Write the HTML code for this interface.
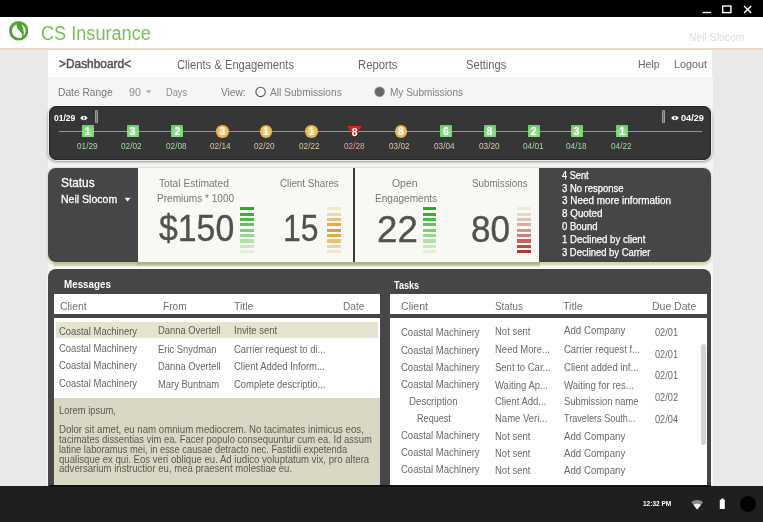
<!DOCTYPE html>
<html lang="en"><head><meta charset="utf-8"><title>CS Insurance - Dashboard</title>
<style>
html,body{margin:0;padding:0;}
body{width:763px;height:522px;overflow:hidden;background:#e9e9e9;font-family:"Liberation Sans",sans-serif;}
#app{position:relative;width:763px;height:522px;overflow:hidden;background:#e9e9e9;}
#app div,#app svg{position:absolute;}
#app span{position:absolute;white-space:pre;line-height:1;transform-origin:0 50%;font-family:"Liberation Sans",sans-serif;}
#tx{left:0;top:0;width:763px;height:522px;will-change:transform;}
</style></head><body><div id="app">
<div style="left:0px;top:0px;width:763.00px;height:17.30px;background:#000;"></div>
<div style="left:0px;top:17.3px;width:763.00px;height:30.70px;background:#fff;"></div>
<div style="left:0px;top:47.8px;width:763.00px;height:1.90px;background:#edd3c0;"></div>
<svg style="left:700px;top:3px" width="60" height="12" viewBox="0 0 60 12"><path d="M2.5 9.5h8.5" stroke="#fff" stroke-width="1.4" fill="none"/><rect x="22.7" y="3" width="8.2" height="6.6" stroke="#fff" stroke-width="1.4" fill="none"/><path d="M44 3l7.2 7M51.2 3l-7.2 7" stroke="#fff" stroke-width="1.4" fill="none"/></svg>
<svg style="left:8.5px;top:21.2px" width="19.3" height="19.6" viewBox="0 0 19.3 19.3" preserveAspectRatio="none"><circle cx="9.65" cy="9.65" r="9.65" fill="#54a233"/><path d="M7.5 3.2C7.6 7.4 9.6 8.6 11.4 10.6C13 12.4 14 14.6 12.6 16.2A6.9 6.9 0 1 1 7.5 3.2Z" fill="#fff"/><path d="M12.6 3.5A6.9 6.9 0 0 1 14.6 14.6C15.2 11 14.4 7 12.6 3.5Z" fill="#fff"/></svg>
<div style="left:48px;top:49.7px;width:664.00px;height:27.30px;background:#fff;"></div>
<div style="left:47.5px;top:77px;width:665.00px;height:410.00px;background:#f5f5f5;"></div>
<svg style="left:144.7px;top:89.3px" width="8" height="6" viewBox="0 0 8 6"><path d="M1 1.2h5.2L3.6 4.4z" fill="#aaa"/></svg>
<svg style="left:254px;top:85px" width="14" height="14" viewBox="0 0 14 14"><circle cx="6.6" cy="6.9" r="4.7" fill="#fff" stroke="#555" stroke-width="1.1"/></svg>
<svg style="left:373px;top:85px" width="14" height="14" viewBox="0 0 14 14"><circle cx="6.6" cy="6.8" r="4.9" fill="#666" stroke="#999" stroke-width="0.8"/></svg>
<div style="left:48.6px;top:106.4px;width:662.20px;height:53.80px;background:#363636;border-radius:8px;box-shadow:inset 0 0 0 1px #262626,0 0 0 1px rgba(255,255,255,.75),0 1.5px 3px 0.5px rgba(0,0,0,.4);"></div>
<div style="left:58.7px;top:131.0px;width:643.50px;height:1.25px;background:#959595;"></div>
<div style="left:95.4px;top:110.2px;width:3.10px;height:12.80px;background:#6e6e6e;border-radius:1.6px;box-shadow:inset 0 0 0 0.8px #a9a9a9;"></div>
<div style="left:661.8px;top:110.2px;width:3.10px;height:12.80px;background:#6e6e6e;border-radius:1.6px;box-shadow:inset 0 0 0 0.8px #a9a9a9;"></div>
<svg style="left:79.8px;top:114.8px" width="8" height="6" viewBox="0 0 8 6"><path d="M0.1 3Q3.9 -1.6 7.8 3Q3.9 7.6 0.1 3Z" fill="#fff"/><ellipse cx="3.9" cy="3" rx="0.75" ry="1.7" fill="#3a3a3a"/></svg>
<svg style="left:670.5px;top:114.8px" width="8" height="6" viewBox="0 0 8 6"><path d="M0.1 3Q3.9 -1.6 7.8 3Q3.9 7.6 0.1 3Z" fill="#fff"/><ellipse cx="3.9" cy="3" rx="0.75" ry="1.7" fill="#3a3a3a"/></svg>
<div style="left:81.5px;top:125.3px;width:12.00px;height:12.10px;background:radial-gradient(circle at 50% 65%,#a0e69a 0,#7fd679 55%,#5ec258 100%);"></div>
<div style="left:126.5px;top:125.3px;width:12.00px;height:12.10px;background:radial-gradient(circle at 50% 65%,#a0e69a 0,#7fd679 55%,#5ec258 100%);"></div>
<div style="left:171.4px;top:125.3px;width:12.00px;height:12.10px;background:radial-gradient(circle at 50% 65%,#a0e69a 0,#7fd679 55%,#5ec258 100%);"></div>
<div style="left:216.30px;top:125.2px;width:12.4px;height:12.4px;border-radius:6.2px;background:radial-gradient(circle at 50% 50%,#f6dfa0 0,#ecc060 45%,#d89a2c 100%);"></div>
<div style="left:259.90px;top:125.2px;width:12.4px;height:12.4px;border-radius:6.2px;background:radial-gradient(circle at 50% 50%,#f6dfa0 0,#ecc060 45%,#d89a2c 100%);"></div>
<div style="left:305.30px;top:125.2px;width:12.4px;height:12.4px;border-radius:6.2px;background:radial-gradient(circle at 50% 50%,#f6dfa0 0,#ecc060 45%,#d89a2c 100%);"></div>
<svg style="left:347.30px;top:125.3px" width="15" height="13" viewBox="0 0 15 13"><path d="M0.3 1h14.4L7.5 12.2z" fill="#e61e1e"/></svg>
<div style="left:394.90px;top:125.2px;width:12.4px;height:12.4px;border-radius:6.2px;background:radial-gradient(circle at 50% 50%,#f6dfa0 0,#ecc060 45%,#d89a2c 100%);"></div>
<div style="left:439.9px;top:125.3px;width:12.00px;height:12.10px;background:radial-gradient(circle at 50% 65%,#a0e69a 0,#7fd679 55%,#5ec258 100%);"></div>
<div style="left:483.5px;top:125.3px;width:12.00px;height:12.10px;background:radial-gradient(circle at 50% 65%,#a0e69a 0,#7fd679 55%,#5ec258 100%);"></div>
<div style="left:527.8px;top:125.3px;width:12.00px;height:12.10px;background:radial-gradient(circle at 50% 65%,#a0e69a 0,#7fd679 55%,#5ec258 100%);"></div>
<div style="left:570.6px;top:125.3px;width:12.00px;height:12.10px;background:radial-gradient(circle at 50% 65%,#a0e69a 0,#7fd679 55%,#5ec258 100%);"></div>
<div style="left:616.2px;top:125.3px;width:12.00px;height:12.10px;background:radial-gradient(circle at 50% 65%,#a0e69a 0,#7fd679 55%,#5ec258 100%);"></div>
<div style="left:48.1px;top:167.6px;width:662.90px;height:94.00px;background:#464648;border-radius:8px;box-shadow:0 2.2px 2.2px 0 #d3d6ae,0 0 2px 0.4px rgba(208,212,165,.7);"></div>
<div style="left:54px;top:261.6px;width:85.00px;height:5.60px;background:linear-gradient(to bottom,#bdbf98 0,#c3c5a0 35%,rgba(205,207,172,.7) 65%,rgba(225,227,200,0) 100%);"></div>
<div style="left:137px;top:261.6px;width:403.00px;height:5.80px;background:linear-gradient(to bottom,#b0b286 0,#b3b58a 40%,rgba(190,192,150,.75) 65%,rgba(215,217,185,0) 100%);"></div>
<div style="left:138px;top:167.6px;width:401.30px;height:94.40px;background:#f8f9f4;"></div>
<div style="left:353px;top:167.6px;width:1.60px;height:94.40px;background:#3c3c3c;"></div>
<svg style="left:124.2px;top:197.4px" width="8" height="6" viewBox="0 0 8 6"><path d="M0.6 0.8h6L3.6 4.6z" fill="#fff"/></svg>
<div style="left:240.3px;top:207.2px;width:13.80px;height:3.10px;background:#22b41f;"></div>
<div style="left:240.3px;top:212.57px;width:13.80px;height:3.10px;background:#2fb82b;"></div>
<div style="left:240.3px;top:217.94px;width:13.80px;height:3.10px;background:#44be3f;"></div>
<div style="left:240.3px;top:223.31px;width:13.80px;height:3.10px;background:#5fc659;"></div>
<div style="left:240.3px;top:228.68px;width:13.80px;height:3.10px;background:#7ccf76;"></div>
<div style="left:240.3px;top:234.05px;width:13.80px;height:3.10px;background:#98d892;"></div>
<div style="left:240.3px;top:239.42px;width:13.80px;height:3.10px;background:#b2e0ac;"></div>
<div style="left:240.3px;top:244.79px;width:13.80px;height:3.10px;background:#cbe7c3;"></div>
<div style="left:240.3px;top:250.16px;width:13.80px;height:3.10px;background:#e3eedb;"></div>
<div style="left:327.3px;top:207.2px;width:13.80px;height:3.10px;background:#ece9d0;"></div>
<div style="left:327.3px;top:212.57px;width:13.80px;height:3.10px;background:#ecd9a6;"></div>
<div style="left:327.3px;top:217.94px;width:13.80px;height:3.10px;background:#e8c47a;"></div>
<div style="left:327.3px;top:223.31px;width:13.80px;height:3.10px;background:#e3ad4e;"></div>
<div style="left:327.3px;top:228.68px;width:13.80px;height:3.10px;background:#df9f33;"></div>
<div style="left:327.3px;top:234.05px;width:13.80px;height:3.10px;background:#e2a846;"></div>
<div style="left:327.3px;top:239.42px;width:13.80px;height:3.10px;background:#e8c076;"></div>
<div style="left:327.3px;top:244.79px;width:13.80px;height:3.10px;background:#ebd6a3;"></div>
<div style="left:327.3px;top:250.16px;width:13.80px;height:3.10px;background:#ece8cf;"></div>
<div style="left:422.7px;top:207.2px;width:13.80px;height:3.10px;background:#22b41f;"></div>
<div style="left:422.7px;top:212.57px;width:13.80px;height:3.10px;background:#2fb82b;"></div>
<div style="left:422.7px;top:217.94px;width:13.80px;height:3.10px;background:#44be3f;"></div>
<div style="left:422.7px;top:223.31px;width:13.80px;height:3.10px;background:#5fc659;"></div>
<div style="left:422.7px;top:228.68px;width:13.80px;height:3.10px;background:#7ccf76;"></div>
<div style="left:422.7px;top:234.05px;width:13.80px;height:3.10px;background:#98d892;"></div>
<div style="left:422.7px;top:239.42px;width:13.80px;height:3.10px;background:#b2e0ac;"></div>
<div style="left:422.7px;top:244.79px;width:13.80px;height:3.10px;background:#cbe7c3;"></div>
<div style="left:422.7px;top:250.16px;width:13.80px;height:3.10px;background:#e3eedb;"></div>
<div style="left:517.3px;top:207.2px;width:13.80px;height:3.10px;background:#ebebde;"></div>
<div style="left:517.3px;top:212.57px;width:13.80px;height:3.10px;background:#e6d9cb;"></div>
<div style="left:517.3px;top:217.94px;width:13.80px;height:3.10px;background:#e0c4b7;"></div>
<div style="left:517.3px;top:223.31px;width:13.80px;height:3.10px;background:#d9ada2;"></div>
<div style="left:517.3px;top:228.68px;width:13.80px;height:3.10px;background:#d2958c;"></div>
<div style="left:517.3px;top:234.05px;width:13.80px;height:3.10px;background:#ca7c75;"></div>
<div style="left:517.3px;top:239.42px;width:13.80px;height:3.10px;background:#c2635e;"></div>
<div style="left:517.3px;top:244.79px;width:13.80px;height:3.10px;background:#ba4c49;"></div>
<div style="left:517.3px;top:250.16px;width:13.80px;height:3.10px;background:#b23a38;"></div>
<div style="left:48.3px;top:268.9px;width:662.50px;height:221.10px;background:#464648;border-radius:8px 8px 0 0;box-shadow:0 0 0 0.8px rgba(255,255,255,.45),0 0 3px 1px rgba(255,255,255,.4);"></div>
<div style="left:54px;top:293.6px;width:326.00px;height:20.20px;background:#fff;"></div>
<div style="left:54px;top:317.6px;width:326.00px;height:168.40px;background:#fff;"></div>
<div style="left:55.6px;top:322.3px;width:322.40px;height:15.70px;background:#e3e3cf;"></div>
<div style="left:54px;top:398.2px;width:326.00px;height:87.80px;background:#d8d8c4;"></div>
<div style="left:389.5px;top:293.6px;width:317.90px;height:20.20px;background:#fff;"></div>
<div style="left:389.5px;top:317.6px;width:317.90px;height:168.40px;background:#fff;"></div>
<div style="left:700.6px;top:343.6px;width:5.10px;height:101.90px;background:#d3d3d3;border-radius:2.5px;"></div>
<div style="left:0px;top:486px;width:763.00px;height:36.00px;background:#1f1f1f;"></div>
<div style="left:48.5px;top:485.3px;width:662.50px;height:1.30px;background:#111;"></div>
<svg style="left:690px;top:498px" width="15" height="13" viewBox="0 0 15 13"><path d="M7.2 11.6L1.3 4.2C4.6 1.2 9.8 1.2 13.1 4.2z" fill="#8a8a8a"/><path d="M7.2 11.6L3.6 7C5.6 5.2 8.8 5.2 10.8 7z" fill="#fff"/></svg>
<svg style="left:718px;top:497px" width="9" height="13" viewBox="0 0 9 13"><path d="M3.2 1.6h2.4v1.2h1.2v9.2H1.8V2.8h1.4z" fill="#fff"/></svg>
<div style="left:740px;top:496px;width:16px;height:16px;border-radius:8px;background:#000;"></div>
<div id="tx">
<span style="left:41.00px;top:23.74px;color:#72c54f;font-size:19.5px;font-weight:400;letter-spacing:0.000px;transform:scaleX(0.9293);">CS Insurance</span>
<span style="left:689.00px;top:31.77px;color:#dcdcdc;font-size:11px;font-weight:400;letter-spacing:0.000px;transform:scaleX(0.9450);">Neil Slocom</span>
<span style="left:58.80px;top:58.10px;color:#555;font-size:12px;font-weight:400;letter-spacing:0.000px;transform:scaleX(0.9902);-webkit-text-stroke:0.5px #555;">&gt;Dashboard&lt;</span>
<span style="left:177.40px;top:58.60px;color:#666;font-size:12px;font-weight:400;letter-spacing:0.000px;transform:scaleX(0.9330);">Clients &amp; Engagements</span>
<span style="left:358.00px;top:58.60px;color:#666;font-size:12px;font-weight:400;letter-spacing:0.000px;transform:scaleX(0.9401);">Reports</span>
<span style="left:465.70px;top:58.60px;color:#666;font-size:12px;font-weight:400;letter-spacing:0.000px;transform:scaleX(0.9294);">Settings</span>
<span style="left:638.30px;top:58.77px;color:#666;font-size:11px;font-weight:400;letter-spacing:0.000px;transform:scaleX(0.9553);">Help</span>
<span style="left:674.30px;top:58.77px;color:#666;font-size:11px;font-weight:400;letter-spacing:0.000px;transform:scaleX(0.9825);">Logout</span>
<span style="left:58.00px;top:86.78px;color:#777;font-size:11px;font-weight:400;letter-spacing:0.000px;transform:scaleX(0.9302);">Date Range</span>
<span style="left:128.60px;top:86.78px;color:#8c8c8c;font-size:11px;font-weight:400;letter-spacing:0.000px;transform:scaleX(0.9738);">90</span>
<span style="left:165.60px;top:86.78px;color:#8c8c8c;font-size:11px;font-weight:400;letter-spacing:0.000px;transform:scaleX(0.8372);">Days</span>
<span style="left:221.00px;top:86.78px;color:#777;font-size:11px;font-weight:400;letter-spacing:0.000px;transform:scaleX(0.9233);">View:</span>
<span style="left:269.50px;top:86.98px;color:#808080;font-size:11px;font-weight:400;letter-spacing:0.000px;transform:scaleX(0.9240);">All Submissions</span>
<span style="left:389.70px;top:86.98px;color:#808080;font-size:11px;font-weight:400;letter-spacing:0.000px;transform:scaleX(0.9122);">My Submissions</span>
<span style="left:53.70px;top:113.24px;color:#fff;font-size:9.6px;font-weight:700;letter-spacing:0.000px;transform:scaleX(0.8871);">01/29</span>
<span style="left:680.60px;top:113.24px;color:#fff;font-size:9.6px;font-weight:700;letter-spacing:0.000px;transform:scaleX(0.9505);">04/29</span>
<span style="left:60.60px;top:175.62px;color:#fff;font-size:13px;font-weight:400;letter-spacing:0.000px;transform:scaleX(0.9102);-webkit-text-stroke:0.3px #fff;">Status</span>
<span style="left:60.50px;top:193.78px;color:#fff;font-size:11px;font-weight:400;letter-spacing:0.000px;transform:scaleX(0.9569);-webkit-text-stroke:0.28px #fff;">Neil Slocom</span>
<span style="left:159.20px;top:177.97px;color:#777;font-size:11px;font-weight:400;letter-spacing:0.000px;transform:scaleX(0.9283);">Total Estimated</span>
<span style="left:157.00px;top:193.08px;color:#777;font-size:11px;font-weight:400;letter-spacing:0.000px;transform:scaleX(0.9139);">Premiums * 1000</span>
<span style="left:279.80px;top:177.97px;color:#777;font-size:11px;font-weight:400;letter-spacing:0.000px;transform:scaleX(0.8898);">Client Shares</span>
<span style="left:391.80px;top:178.47px;color:#777;font-size:11px;font-weight:400;letter-spacing:0.000px;transform:scaleX(0.9481);">Open</span>
<span style="left:375.00px;top:193.38px;color:#777;font-size:11px;font-weight:400;letter-spacing:0.000px;transform:scaleX(0.9155);">Engagements</span>
<span style="left:472.00px;top:178.28px;color:#777;font-size:11px;font-weight:400;letter-spacing:0.000px;transform:scaleX(0.8909);">Submissions</span>
<span style="left:159.30px;top:209.69px;color:#4f544b;font-size:37.5px;font-weight:400;letter-spacing:0.000px;transform:scaleX(0.9011);-webkit-text-stroke:0.4px #4f544b;text-shadow:0 0 1.5px #fff;">$150</span>
<span style="left:283.20px;top:209.69px;color:#4f544b;font-size:37.5px;font-weight:400;letter-spacing:0.000px;transform:scaleX(0.8519);-webkit-text-stroke:0.4px #4f544b;text-shadow:0 0 1.5px #fff;">15</span>
<span style="left:376.72px;top:210.69px;color:#4f544b;font-size:37.5px;font-weight:400;letter-spacing:0.000px;transform:scaleX(0.9780);-webkit-text-stroke:0.4px #4f544b;text-shadow:0 0 1.5px #fff;">22</span>
<span style="left:470.86px;top:210.69px;color:#4f544b;font-size:37.5px;font-weight:400;letter-spacing:0.000px;transform:scaleX(0.9359);-webkit-text-stroke:0.4px #4f544b;text-shadow:0 0 1.5px #fff;">80</span>
<span style="left:562.20px;top:170.85px;color:#fff;font-size:10px;font-weight:400;letter-spacing:0.000px;transform:scaleX(0.9199);-webkit-text-stroke:0.25px #fff;">4 Sent</span>
<span style="left:562.20px;top:183.65px;color:#fff;font-size:10px;font-weight:400;letter-spacing:0.000px;transform:scaleX(0.9454);-webkit-text-stroke:0.25px #fff;">3 No response</span>
<span style="left:562.20px;top:196.45px;color:#fff;font-size:10px;font-weight:400;letter-spacing:0.000px;transform:scaleX(0.9909);-webkit-text-stroke:0.25px #fff;">3 Need more information</span>
<span style="left:562.20px;top:209.25px;color:#fff;font-size:10px;font-weight:400;letter-spacing:0.000px;transform:scaleX(0.9857);-webkit-text-stroke:0.25px #fff;">8 Quoted</span>
<span style="left:562.20px;top:222.05px;color:#fff;font-size:10px;font-weight:400;letter-spacing:0.000px;transform:scaleX(0.9538);-webkit-text-stroke:0.25px #fff;">0 Bound</span>
<span style="left:562.20px;top:234.85px;color:#fff;font-size:10px;font-weight:400;letter-spacing:0.000px;transform:scaleX(0.9616);-webkit-text-stroke:0.25px #fff;">1 Declined by client</span>
<span style="left:562.20px;top:247.65px;color:#fff;font-size:10px;font-weight:400;letter-spacing:0.000px;transform:scaleX(0.9419);-webkit-text-stroke:0.25px #fff;">3 Declined by Carrier</span>
<span style="left:63.70px;top:279.27px;color:#fff;font-size:11px;font-weight:700;letter-spacing:0.000px;transform:scaleX(0.8919);">Messages</span>
<span style="left:60.00px;top:300.77px;color:#707070;font-size:11px;font-weight:400;letter-spacing:0.000px;transform:scaleX(0.9477);">Client</span>
<span style="left:162.50px;top:300.77px;color:#707070;font-size:11px;font-weight:400;letter-spacing:0.000px;transform:scaleX(0.9216);">From</span>
<span style="left:234.40px;top:300.77px;color:#707070;font-size:11px;font-weight:400;letter-spacing:0.000px;transform:scaleX(0.9479);">Title</span>
<span style="left:342.70px;top:300.77px;color:#707070;font-size:11px;font-weight:400;letter-spacing:0.000px;transform:scaleX(0.9214);">Date</span>
<span style="left:59.00px;top:326.55px;color:#5c5c55;font-size:10px;font-weight:400;letter-spacing:0.000px;transform:scaleX(0.9419);">Coastal Machinery</span>
<span style="left:157.80px;top:326.25px;color:#5c5c55;font-size:10px;font-weight:400;letter-spacing:0.000px;transform:scaleX(0.9400);">Danna Overtell</span>
<span style="left:233.50px;top:325.95px;color:#5c5c55;font-size:10px;font-weight:400;letter-spacing:0.000px;transform:scaleX(0.9450);">Invite sent</span>
<span style="left:59.00px;top:343.95px;color:#666;font-size:10px;font-weight:400;letter-spacing:0.000px;transform:scaleX(0.9419);">Coastal Machinery</span>
<span style="left:157.80px;top:344.55px;color:#666;font-size:10px;font-weight:400;letter-spacing:0.000px;transform:scaleX(0.9400);">Eric Snydman</span>
<span style="left:233.50px;top:344.95px;color:#666;font-size:10px;font-weight:400;letter-spacing:0.000px;transform:scaleX(0.9450);">Carrier request to di...</span>
<span style="left:59.00px;top:361.35px;color:#666;font-size:10px;font-weight:400;letter-spacing:0.000px;transform:scaleX(0.9419);">Coastal Machinery</span>
<span style="left:157.80px;top:362.05px;color:#666;font-size:10px;font-weight:400;letter-spacing:0.000px;transform:scaleX(0.9400);">Danna Overtell</span>
<span style="left:233.50px;top:362.45px;color:#666;font-size:10px;font-weight:400;letter-spacing:0.000px;transform:scaleX(0.9450);">Client Added Inform...</span>
<span style="left:59.00px;top:378.75px;color:#666;font-size:10px;font-weight:400;letter-spacing:0.000px;transform:scaleX(0.9419);">Coastal Machinery</span>
<span style="left:157.80px;top:379.55px;color:#666;font-size:10px;font-weight:400;letter-spacing:0.000px;transform:scaleX(0.9400);">Mary Buntnam</span>
<span style="left:233.50px;top:379.95px;color:#666;font-size:10px;font-weight:400;letter-spacing:0.000px;transform:scaleX(0.9450);">Complete descriptio...</span>
<span style="left:59.20px;top:406.15px;color:#5a5a50;font-size:10px;font-weight:400;letter-spacing:0.000px;transform:scaleX(0.9382);">Lorem ipsum,</span>
<span style="left:59.20px;top:424.95px;color:#5a5a50;font-size:10px;font-weight:400;letter-spacing:0.000px;transform:scaleX(0.9657);">Dolor sit amet, eu nam omnium mediocrem. No tacimates inimicus eos,</span>
<span style="left:59.20px;top:434.80px;color:#5a5a50;font-size:10px;font-weight:400;letter-spacing:0.000px;transform:scaleX(0.9446);">tacimates dissentias vim ea. Facer populo consequuntur cum ea. Id assum</span>
<span style="left:59.20px;top:444.65px;color:#5a5a50;font-size:10px;font-weight:400;letter-spacing:0.000px;transform:scaleX(0.9321);">latine laboramus mei, in esse causae detracto nec. Fastidii expetenda</span>
<span style="left:59.20px;top:454.50px;color:#5a5a50;font-size:10px;font-weight:400;letter-spacing:0.000px;transform:scaleX(0.9587);">qualisque ex qui. Eos veri oblique eu. Ad iudico voluptatum vix, pro altera</span>
<span style="left:59.20px;top:464.35px;color:#5a5a50;font-size:10px;font-weight:400;letter-spacing:0.000px;transform:scaleX(0.9551);">adversarium instructior eu, mea praesent molestiae eu.</span>
<span style="left:394.00px;top:279.77px;color:#fff;font-size:11px;font-weight:700;letter-spacing:0.000px;transform:scaleX(0.8263);">Tasks</span>
<span style="left:401.00px;top:300.77px;color:#707070;font-size:11px;font-weight:400;letter-spacing:0.000px;transform:scaleX(0.9620);">Client</span>
<span style="left:495.30px;top:300.77px;color:#707070;font-size:11px;font-weight:400;letter-spacing:0.000px;transform:scaleX(0.8963);">Status</span>
<span style="left:563.00px;top:300.77px;color:#707070;font-size:11px;font-weight:400;letter-spacing:0.000px;transform:scaleX(0.9677);">Title</span>
<span style="left:651.60px;top:300.77px;color:#707070;font-size:11px;font-weight:400;letter-spacing:0.000px;transform:scaleX(0.9514);">Due Date</span>
<span style="left:401.00px;top:327.95px;color:#6a6a6a;font-size:10px;font-weight:400;letter-spacing:0.000px;transform:scaleX(0.9491);">Coastal Machinery</span>
<span style="left:495.30px;top:326.95px;color:#6a6a6a;font-size:10px;font-weight:400;letter-spacing:0.000px;transform:scaleX(0.9500);">Not sent</span>
<span style="left:563.50px;top:326.25px;color:#6a6a6a;font-size:10px;font-weight:400;letter-spacing:0.000px;transform:scaleX(0.9673);">Add Company</span>
<span style="left:401.00px;top:345.55px;color:#6a6a6a;font-size:10px;font-weight:400;letter-spacing:0.000px;transform:scaleX(0.9491);">Coastal Machinery</span>
<span style="left:495.30px;top:345.45px;color:#6a6a6a;font-size:10px;font-weight:400;letter-spacing:0.000px;transform:scaleX(0.9500);">Need More...</span>
<span style="left:563.50px;top:345.45px;color:#6a6a6a;font-size:10px;font-weight:400;letter-spacing:0.000px;transform:scaleX(0.9411);">Carrier request f...</span>
<span style="left:401.00px;top:362.75px;color:#6a6a6a;font-size:10px;font-weight:400;letter-spacing:0.000px;transform:scaleX(0.9491);">Coastal Machinery</span>
<span style="left:495.30px;top:362.95px;color:#6a6a6a;font-size:10px;font-weight:400;letter-spacing:0.000px;transform:scaleX(0.9500);">Sent to Car...</span>
<span style="left:563.50px;top:362.95px;color:#6a6a6a;font-size:10px;font-weight:400;letter-spacing:0.000px;transform:scaleX(0.9565);">Client added inf...</span>
<span style="left:401.00px;top:380.15px;color:#6a6a6a;font-size:10px;font-weight:400;letter-spacing:0.000px;transform:scaleX(0.9491);">Coastal Machinery</span>
<span style="left:495.30px;top:380.95px;color:#6a6a6a;font-size:10px;font-weight:400;letter-spacing:0.000px;transform:scaleX(0.9500);">Waiting Ap...</span>
<span style="left:563.50px;top:380.95px;color:#6a6a6a;font-size:10px;font-weight:400;letter-spacing:0.000px;transform:scaleX(0.9644);">Waiting for res...</span>
<span style="left:409.00px;top:396.95px;color:#6a6a6a;font-size:10px;font-weight:400;letter-spacing:0.000px;transform:scaleX(0.9705);">Description</span>
<span style="left:495.30px;top:397.45px;color:#6a6a6a;font-size:10px;font-weight:400;letter-spacing:0.000px;transform:scaleX(0.9500);">Client Add...</span>
<span style="left:563.50px;top:397.45px;color:#6a6a6a;font-size:10px;font-weight:400;letter-spacing:0.000px;transform:scaleX(0.9359);">Submission name</span>
<span style="left:417.40px;top:413.95px;color:#6a6a6a;font-size:10px;font-weight:400;letter-spacing:0.000px;transform:scaleX(0.9101);">Request</span>
<span style="left:495.30px;top:414.45px;color:#6a6a6a;font-size:10px;font-weight:400;letter-spacing:0.000px;transform:scaleX(0.9500);">Name Veri...</span>
<span style="left:563.50px;top:414.45px;color:#6a6a6a;font-size:10px;font-weight:400;letter-spacing:0.000px;transform:scaleX(0.9104);">Travelers South...</span>
<span style="left:401.00px;top:430.75px;color:#6a6a6a;font-size:10px;font-weight:400;letter-spacing:0.000px;transform:scaleX(0.9491);">Coastal Machinery</span>
<span style="left:495.30px;top:431.95px;color:#6a6a6a;font-size:10px;font-weight:400;letter-spacing:0.000px;transform:scaleX(0.9500);">Not sent</span>
<span style="left:563.50px;top:431.95px;color:#6a6a6a;font-size:10px;font-weight:400;letter-spacing:0.000px;transform:scaleX(0.9673);">Add Company</span>
<span style="left:401.00px;top:447.95px;color:#6a6a6a;font-size:10px;font-weight:400;letter-spacing:0.000px;transform:scaleX(0.9491);">Coastal Machinery</span>
<span style="left:495.30px;top:449.45px;color:#6a6a6a;font-size:10px;font-weight:400;letter-spacing:0.000px;transform:scaleX(0.9500);">Not sent</span>
<span style="left:563.50px;top:449.45px;color:#6a6a6a;font-size:10px;font-weight:400;letter-spacing:0.000px;transform:scaleX(0.9673);">Add Company</span>
<span style="left:401.00px;top:464.95px;color:#6a6a6a;font-size:10px;font-weight:400;letter-spacing:0.000px;transform:scaleX(0.9491);">Coastal Machinery</span>
<span style="left:495.30px;top:466.45px;color:#6a6a6a;font-size:10px;font-weight:400;letter-spacing:0.000px;transform:scaleX(0.9500);">Not sent</span>
<span style="left:563.50px;top:466.45px;color:#6a6a6a;font-size:10px;font-weight:400;letter-spacing:0.000px;transform:scaleX(0.9673);">Add Company</span>
<span style="left:654.60px;top:328.35px;color:#6a6a6a;font-size:10px;font-weight:400;letter-spacing:0.000px;transform:scaleX(0.9190);">02/01</span>
<span style="left:654.60px;top:350.05px;color:#6a6a6a;font-size:10px;font-weight:400;letter-spacing:0.000px;transform:scaleX(0.9190);">02/01</span>
<span style="left:654.60px;top:371.45px;color:#6a6a6a;font-size:10px;font-weight:400;letter-spacing:0.000px;transform:scaleX(0.9190);">02/01</span>
<span style="left:654.60px;top:393.15px;color:#6a6a6a;font-size:10px;font-weight:400;letter-spacing:0.000px;transform:scaleX(0.9190);">02/02</span>
<span style="left:654.60px;top:414.65px;color:#6a6a6a;font-size:10px;font-weight:400;letter-spacing:0.000px;transform:scaleX(0.9190);">02/04</span>
<span style="left:642.70px;top:500.18px;color:#fff;font-size:7px;font-weight:700;letter-spacing:0.000px;transform:scaleX(0.9273);">12:32 PM</span>
<span style="left:76.80px;top:141.92px;color:#a3d6a6;font-size:9px;font-weight:400;letter-spacing:0.000px;transform:scaleX(0.9149);">01/29</span>
<span style="left:84.50px;top:126.41px;color:#fff;font-size:10.5px;font-weight:700;letter-spacing:0.000px;">1</span>
<span style="left:121.30px;top:141.92px;color:#a3d6a6;font-size:9px;font-weight:400;letter-spacing:0.000px;transform:scaleX(0.9149);">02/02</span>
<span style="left:129.50px;top:126.41px;color:#fff;font-size:10.5px;font-weight:700;letter-spacing:0.000px;">3</span>
<span style="left:166.40px;top:141.92px;color:#a3d6a6;font-size:9px;font-weight:400;letter-spacing:0.000px;transform:scaleX(0.9149);">02/08</span>
<span style="left:174.40px;top:126.41px;color:#fff;font-size:10.5px;font-weight:700;letter-spacing:0.000px;">2</span>
<span style="left:209.80px;top:141.92px;color:#dcc7a2;font-size:9px;font-weight:400;letter-spacing:0.000px;transform:scaleX(0.9149);">02/14</span>
<span style="left:219.50px;top:126.41px;color:#fff8e6;font-size:10.5px;font-weight:700;letter-spacing:0.000px;">3</span>
<span style="left:254.20px;top:141.92px;color:#dcc7a2;font-size:9px;font-weight:400;letter-spacing:0.000px;transform:scaleX(0.9149);">02/20</span>
<span style="left:263.10px;top:126.41px;color:#fff8e6;font-size:10.5px;font-weight:700;letter-spacing:0.000px;">1</span>
<span style="left:299.40px;top:141.92px;color:#dcc7a2;font-size:9px;font-weight:400;letter-spacing:0.000px;transform:scaleX(0.9149);">02/22</span>
<span style="left:308.50px;top:126.41px;color:#fff8e6;font-size:10.5px;font-weight:700;letter-spacing:0.000px;">1</span>
<span style="left:344.20px;top:141.92px;color:#e6a3a3;font-size:9px;font-weight:400;letter-spacing:0.000px;transform:scaleX(0.9149);">02/28</span>
<span style="left:351.80px;top:126.61px;color:#fff;font-size:10.5px;font-weight:700;letter-spacing:0.000px;">8</span>
<span style="left:388.70px;top:141.92px;color:#dcc7a2;font-size:9px;font-weight:400;letter-spacing:0.000px;transform:scaleX(0.9149);">03/02</span>
<span style="left:398.10px;top:126.41px;color:#fff8e6;font-size:10.5px;font-weight:700;letter-spacing:0.000px;">8</span>
<span style="left:433.70px;top:141.92px;color:#dcc7a2;font-size:9px;font-weight:400;letter-spacing:0.000px;transform:scaleX(0.9149);">03/04</span>
<span style="left:442.90px;top:126.41px;color:#fff;font-size:10.5px;font-weight:700;letter-spacing:0.000px;">6</span>
<span style="left:478.70px;top:141.92px;color:#dcc7a2;font-size:9px;font-weight:400;letter-spacing:0.000px;transform:scaleX(0.9149);">03/20</span>
<span style="left:486.50px;top:126.41px;color:#fff;font-size:10.5px;font-weight:700;letter-spacing:0.000px;">8</span>
<span style="left:523.20px;top:141.92px;color:#a3d6a6;font-size:9px;font-weight:400;letter-spacing:0.000px;transform:scaleX(0.9149);">04/01</span>
<span style="left:530.80px;top:126.41px;color:#fff;font-size:10.5px;font-weight:700;letter-spacing:0.000px;">2</span>
<span style="left:566.10px;top:141.92px;color:#a3d6a6;font-size:9px;font-weight:400;letter-spacing:0.000px;transform:scaleX(0.9149);">04/18</span>
<span style="left:573.60px;top:126.41px;color:#fff;font-size:10.5px;font-weight:700;letter-spacing:0.000px;">3</span>
<span style="left:610.50px;top:141.92px;color:#a3d6a6;font-size:9px;font-weight:400;letter-spacing:0.000px;transform:scaleX(0.9149);">04/22</span>
<span style="left:619.20px;top:126.41px;color:#fff;font-size:10.5px;font-weight:700;letter-spacing:0.000px;">1</span>
</div>
</div></body></html>
